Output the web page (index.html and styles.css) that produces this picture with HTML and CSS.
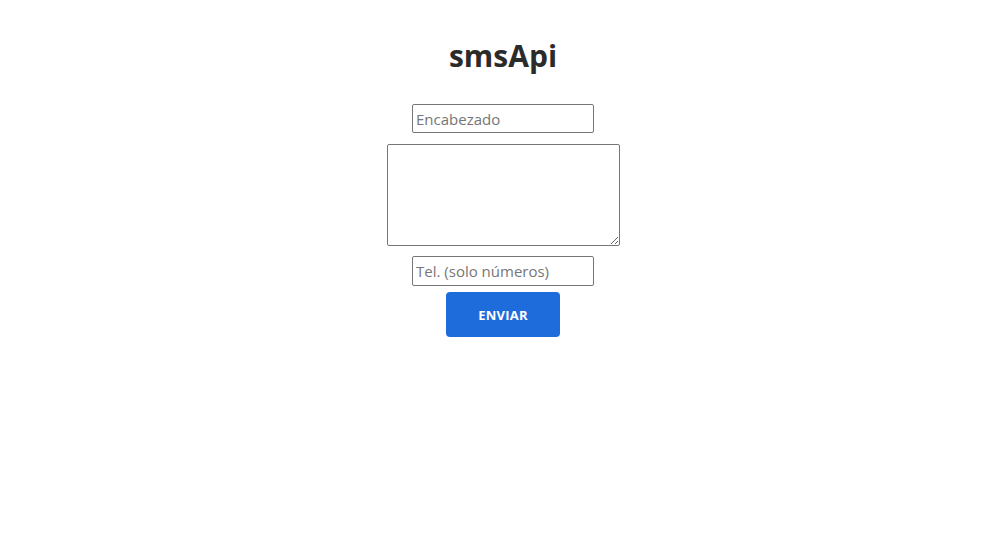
FILE: index.html
```html
<!DOCTYPE html>
<html lang="es">
<head>
<meta charset="utf-8">
<title>smsApi</title>
<link rel="stylesheet" href="styles.css">
</head>
<body>
<main class="page">
  <h1 class="title">smsApi</h1>
  <form class="form">
    <input class="field" type="text" placeholder="Encabezado">
    <textarea class="message"></textarea>
    <input class="field field-tel" type="text" placeholder="Tel. (solo números)">
    <button class="send" type="button">ENVIAR</button>
  </form>
</main>
</body>
</html>
```

FILE: styles.css
```css
html, body {
  margin: 0;
  padding: 0;
  background: #ffffff;
}

body {
  font-family: "Open Sans", "Noto Sans", sans-serif;
  color: #333333;
}

.page {
  display: flex;
  flex-direction: column;
  align-items: center;
  padding-left: 7px;
  padding-top: 34px;
}

.title {
  margin: 0;
  font-size: 30px;
  font-weight: 700;
  line-height: 44px;
  color: #2b2b2b;
}

.form {
  display: flex;
  flex-direction: column;
  align-items: center;
  margin-top: 26px;
}

.field {
  box-sizing: border-box;
  width: 182px;
  height: 29px;
  border: 1px solid #767676;
  border-radius: 2px;
  padding: 1px 3px;
  font-family: "Open Sans", "Noto Sans", sans-serif;
  font-size: 15px;
  color: #333;
  margin: 0;
}

.field::placeholder {
  color: #767676;
}

.message {
  box-sizing: border-box;
  width: 233px;
  height: 102px;
  border: 1px solid #767676;
  border-radius: 2px;
  margin: 11px 0 0 0;
  padding: 2px;
  font-family: "Open Sans", sans-serif;
  font-size: 15px;
}

.field-tel {
  margin-top: 10px;
  height: 30px;
}

.send {
  box-sizing: border-box;
  margin-top: 6px;
  width: 114px;
  height: 45px;
  border: none;
  border-radius: 4px;
  background: #1e6bdc;
  color: #ffffff;
  font-family: "Open Sans", sans-serif;
  font-weight: 700;
  font-size: 13px;
  letter-spacing: 0.2px;
  cursor: pointer;
}
```
